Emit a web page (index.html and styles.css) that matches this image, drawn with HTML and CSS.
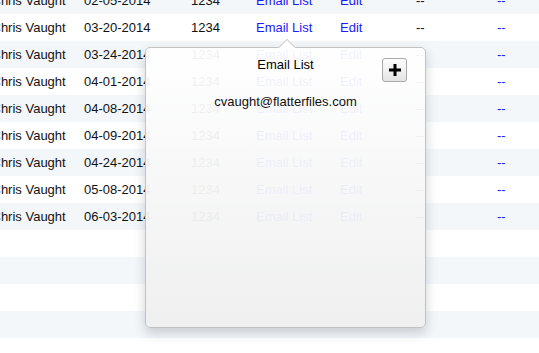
FILE: index.html
```html
<!DOCTYPE html>
<html>
<head>
<meta charset="utf-8">
<link rel="stylesheet" href="styles.css">
</head>
<body>
<div class="page">
  <div class="table">
    <div class="row stripe"><span>Chris Vaught</span><span>02-05-2014</span><span>1234</span><a>Email List</a><a>Edit</a><span>--</span><a>--</a></div>
    <div class="row"><span>Chris Vaught</span><span>03-20-2014</span><span>1234</span><a>Email List</a><a>Edit</a><span>--</span><a>--</a></div>
    <div class="row stripe"><span>Chris Vaught</span><span>03-24-2014</span><span>1234</span><a>Email List</a><a>Edit</a><span>--</span><a>--</a></div>
    <div class="row"><span>Chris Vaught</span><span>04-01-2014</span><span>1234</span><a>Email List</a><a>Edit</a><span>--</span><a>--</a></div>
    <div class="row stripe"><span>Chris Vaught</span><span>04-08-2014</span><span>1234</span><a>Email List</a><a>Edit</a><span>--</span><a>--</a></div>
    <div class="row"><span>Chris Vaught</span><span>04-09-2014</span><span>1234</span><a>Email List</a><a>Edit</a><span>--</span><a>--</a></div>
    <div class="row stripe"><span>Chris Vaught</span><span>04-24-2014</span><span>1234</span><a>Email List</a><a>Edit</a><span>--</span><a>--</a></div>
    <div class="row"><span>Chris Vaught</span><span>05-08-2014</span><span>1234</span><a>Email List</a><a>Edit</a><span>--</span><a>--</a></div>
    <div class="row stripe"><span>Chris Vaught</span><span>06-03-2014</span><span>1234</span><a>Email List</a><a>Edit</a><span>--</span><a>--</a></div>
    <div class="row"></div>
    <div class="row stripe"></div>
    <div class="row"></div>
    <div class="row stripe"></div>
    <div class="row"></div>
  </div>
  <div class="popover">
    <div class="arrow"></div>
    <div class="pop-head">
      <div class="pop-title">Email List</div>
      <button class="add-btn"><svg width="12" height="12" viewBox="0 0 12 12"><path d="M4.5 0h3v4.5H12v3H7.5V12h-3V7.5H0v-3h4.5z" fill="#000"/></svg></button>
    </div>
    <div class="pop-email">cvaught@flatterfiles.com</div>
  </div>
</div>
</body>
</html>
```
FILE: styles.css
```css
html, body {
  margin: 0;
  padding: 0;
  background: #fff;
  overflow: hidden;
}
.page {
  position: relative;
  width: 539px;
  height: 353px;
  overflow: hidden;
  font-family: "Liberation Sans", Arial, sans-serif;
  font-size: 13px;
  color: #111;
}
.table {
  margin-top: -13px;
  margin-left: -8.5px;
}
.row {
  display: grid;
  grid-template-columns: 92.5px 107px 65px 84px 76px 81px 60px;
  height: 27px;
  align-items: center;
  white-space: nowrap;
  background: #fff;
}
.row.stripe {
  background: #f4f7fa;
}
.row a {
  color: #1a1aff;
  text-decoration: none;
}
.popover {
  position: absolute;
  left: 145px;
  top: 47px;
  width: 279px;
  height: 279px;
  border: 1px solid #c2c2c2;
  border-radius: 5px;
  background: linear-gradient(to bottom, rgba(255,255,255,0.94), rgba(238,239,238,0.96));
  box-shadow: 0 5px 12px rgba(40,50,60,0.22);
}
.arrow {
  position: absolute;
  left: 130px;
  top: -11px;
  width: 20px;
  height: 11px;
  overflow: hidden;
}
.arrow::before {
  content: "";
  position: absolute;
  left: 3px;
  top: 5px;
  width: 14px;
  height: 14px;
  background: #fff;
  border: 1px solid #c8c8c8;
  transform: rotate(45deg);
}
.pop-head {
  position: relative;
  height: 34px;
  padding-top: 9px;
  box-sizing: border-box;
  text-align: center;
}
.pop-title {
  color: #000;
  line-height: 16px;
}
.add-btn {
  position: absolute;
  right: 18px;
  top: 10px;
  width: 25px;
  height: 24px;
  padding: 0;
  border: 1px solid #a9a9a9;
  border-radius: 3px;
  background: linear-gradient(to bottom, #fdfdfd, #e4e4e4);
  display: flex;
  align-items: center;
  justify-content: center;
}
.pop-email {
  margin-top: 12px;
  text-align: center;
  color: #111;
  line-height: 16px;
}
```
